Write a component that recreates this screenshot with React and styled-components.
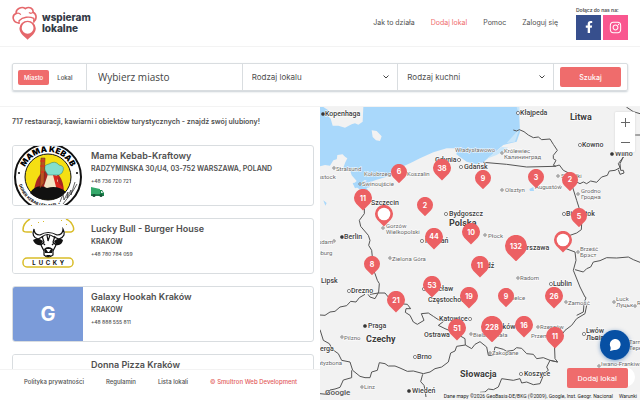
import React from 'react'
import styled, { createGlobalStyle, css } from 'styled-components'
import { FaFacebookF, FaInstagram } from 'react-icons/fa'

const colors = {
  brand: '#ef6c6c',
  text: '#4f4f4f',
  line: '#d9dde0',
}

const cards = [
  {
    name: 'Mama Kebab-Kraftowy',
    address: 'RADZYMINSKA 30/U4, 03-752 WARSZAWA, POLAND',
    phone: '+48 736 720 721',
    thumb: 'kebab',
    delivery: true,
  },
  {
    name: 'Lucky Bull - Burger House',
    address: 'KRAKOW',
    phone: '+48 780 784 059',
    thumb: 'bull',
  },
  {
    name: 'Galaxy Hookah Kraków',
    address: 'KRAKOW',
    phone: '+48 888 555 811',
    thumb: 'letter',
  },
  {
    name: 'Donna Pizza Kraków',
    thumb: 'none',
  },
]

// x, y is the middle of the pin head on the 320x293 map
const pins = [
  { x: 79, y: 65, size: 16, count: 6 },
  { x: 122, y: 61, size: 18, count: 38 },
  { x: 163, y: 71, size: 16, count: 9 },
  { x: 216, y: 70, size: 16, count: 3 },
  { x: 250, y: 73, size: 16, count: 2 },
  { x: 43, y: 91, size: 18, count: 11 },
  { x: 105, y: 98, size: 16, count: 2 },
  { x: 64, y: 107, size: 18 },
  { x: 259, y: 109, size: 16, count: 5 },
  { x: 114, y: 130, size: 18, count: 44 },
  { x: 151, y: 125, size: 18, count: 10 },
  { x: 196, y: 139, size: 22, count: 132 },
  { x: 243, y: 133, size: 18 },
  { x: 52, y: 157, size: 16, count: 8 },
  { x: 160, y: 158, size: 18, count: 11 },
  { x: 112, y: 178, size: 18, count: 53 },
  { x: 149, y: 189, size: 18, count: 19 },
  { x: 186, y: 189, size: 16, count: 9 },
  { x: 234, y: 189, size: 18, count: 26 },
  { x: 76, y: 193, size: 18, count: 21 },
  { x: 137, y: 221, size: 18, count: 51 },
  { x: 172, y: 220, size: 22, count: 228 },
  { x: 204, y: 218, size: 18, count: 16 },
  { x: 235, y: 229, size: 18, count: 11 },
]

const capitals = ['Kopenhaga', 'Berlin', 'Praga', 'Wiedeń', 'Wilno']

// kind: c = country, b = big city, s = small town
const places = [
  ['c', 250, 13, 'Litwa'],
  ['c', 129, 119, 'Polska'],
  ['c', 46, 235, 'Czechy'],
  ['c', 140, 270, 'Słowacja'],
  ['b', 5, 9, 'Kopenhaga', 3, 7],
  ['b', 200, 8, 'Kłajpeda', 198, 6],
  ['b', 262, 40, 'Kowno', 260, 38],
  ['b', 295, 49, 'Wilno', 292, 47],
  ['b', 115, 55, 'Gdynia', 139, 53],
  ['b', 144, 62, 'Gdańsk', 141, 60],
  ['b', 51, 98, 'Szczecin'],
  ['b', 129, 109, 'Bydgoszcz', 126, 107],
  ['b', 24, 132, 'Berlin', 22, 130],
  ['b', 105, 136, 'Poznań', 102, 134],
  ['b', 246, 109, 'Białystok', 244, 107],
  ['b', 197, 143, 'Warszawa'],
  ['b', 159, 161, 'Łódź'],
  ['b', 233, 179, 'Lublin', 231, 177],
  ['b', 1, 176, 'Lipsk'],
  ['b', 31, 186, 'Drezno', 29, 184],
  ['b', 106, 184, 'Wrocław', 104, 182],
  ['b', 108, 195, 'Częstochowa'],
  ['b', 48, 221, 'Praga', 45, 219],
  ['b', 119, 214, 'Katowice', 150, 212],
  ['b', 104, 230, 'Ostrawa'],
  ['b', 172, 222, 'Kraków'],
  ['b', 97, 252, 'Brno', 95, 250],
  ['b', 92, 286, 'Wiedeń', 89, 284],
  ['b', 204, 269, 'Koszyce', 201, 267],
  ['b', 266, 226, 'Lwów', 264, 227],
  ['b', 266, 233, 'Львів'],
  ['b', -25, 244, 'Norymberga'],
  ['s', 16, 64, 'Stralsund', 14, 61],
  ['s', -6, 72, 'Rostock'],
  ['s', 44, 69, 'Kołobrzeg'],
  ['s', 87, 69, 'Koszalin'],
  ['s', 42, 79, 'Świnoujście', 40, 77],
  ['s', 135, 45, 'Władysławowo'],
  ['s', 184, 46, 'Królewiec', 182, 46],
  ['s', 184, 52, 'Калининград'],
  ['s', 185, 85, 'Olsztyn', 182, 83],
  ['s', 215, 82, 'Augustów', 240, 80],
  ['s', 241, 71, 'Suwałki', 238, 69],
  ['s', 261, 86, 'Grodno', 258, 87],
  ['s', 261, 92, 'Гродна'],
  ['s', 66, 121, 'Gorzów', 63, 121],
  ['s', 66, 127, 'Wielkopolski'],
  ['s', -11, 137, 'Potsdam', 14, 134],
  ['s', -18, 148, 'Magdeburg'],
  ['s', 72, 154, 'Zielona Góra', 70, 151],
  ['s', 168, 131, 'Płock', 165, 128],
  ['s', 260, 144, 'Brześć', 258, 145],
  ['s', 260, 150, 'Брэст'],
  ['s', 200, 173, 'Radom', 198, 171],
  ['s', 189, 193, 'Kielce'],
  ['s', 248, 198, 'Zamość', 246, 195],
  ['s', 296, 194, 'Łuck', 294, 195],
  ['s', 296, 200, 'Луцьк'],
  ['s', 317, 198, 'Równe', 315, 199],
  ['s', 24, 233, 'Pilzno', 22, 230],
  ['s', -6, 258, 'Ratyzbona'],
  ['s', 153, 230, 'Bielsko-Biała', 151, 227],
  ['s', 220, 222, 'Rzeszów', 218, 220],
  ['s', 211, 231, 'Przemyśl'],
  ['s', 172, 248, 'Zakopane', 170, 246],
  ['s', 44, 282, 'Linz', 42, 280],
  ['s', 309, 237, 'Tarnopol'],
  ['s', 309, 243, 'Тернопіль'],
  ['s', 281, 259, 'Iwano-Frankiwsk', 279, 259],
]

const borders = [
  'M133 305 133 320 118 340 122 358 145 385 150 400 146 415 155 430 157 450 155 480 165 500 172 520 178 530 176 555 165 575 150 570 144 562',
  'M135 562 118 572 108 585 92 583 80 596 60 600 45 613 30 615 15 625 0 624',
  'M150 562 175 558 195 558 205 570 225 575 240 590 262 592 272 605 258 605 256 616 270 625 280 645 292 652 312 640 304 620 325 618 340 628 355 638 375 640 355 655 375 665 400 675 435 695 436 714',
  'M480 704 465 712 455 725 436 714 410 718 405 732 392 738 385 765 365 780 345 785 330 795 310 800 280 792 262 793 240 783 225 777 205 777 195 770 178 767 172 790 155 795 150 812 135 812 120 808 98 790 90 765 65 760 55 740 38 728 28 710 10 700 0 668',
  'M95 790 95 812 70 819 60 841 45 846 30 849 20 862 0 860',
  'M308 802 302 824 312 835 315 849 318 870',
  'M580 69 590 72 598 68 612 74 625 84 640 92 655 90 665 98 690 96 700 112 712 130 700 145 700 155 708 160 700 175 708 178',
  'M490 166 560 172 620 180 705 178 718 174 730 190 750 200 770 225 780 230 790 225 800 230 812 222 830 226 845 210 862 205 868 192 885 190 900 182 895 170 910 150 900 170 902 190 910 190 912 198 900 202 895 188',
  'M919 0 940 14 960 20M942 84 960 84',
  'M757 238 770 280 778 305M785 350 784 368 770 378 750 385M738 425 765 435 768 460 760 490 768 510 780 540 795 570 798 572 792 590 790 615 770 625',
  'M765 488 790 495 800 485 812 480 820 465 840 461 860 452 890 453 925 450 940 458 960 466',
  'M800 595 795 620 770 635 755 655 735 670 720 690 703 705 705 755 713 765 690 760 670 752 650 755 640 742 620 740 605 724 590 722 580 730 560 733 550 727 525 720 520 745 505 745 500 720 480 704',
  'M713 765 690 760 680 780 685 790 672 800 660 830 640 833 620 825 605 828 600 815 580 820 545 815 535 840 520 848 505 846 495 855 480 856',
]

export default function App() {
  return (
    <Page>
      <GlobalStyle />
      <Header />
      <Search />
      <Main>
        <Listing />
        <Map />
      </Main>
    </Page>
  )
}

function Header() {
  return (
    <HeaderBar>
      <Brand href='#'>
        <LogoMark />
        <span>
          wspieram
          <br />
          lokalne
        </span>
      </Brand>
      <Nav>
        <NavLink href='#'>Jak to działa</NavLink>
        <NavLink href='#' $active>
          Dodaj lokal
        </NavLink>
        <NavLink href='#'>Pomoc</NavLink>
        <NavLink href='#'>Zaloguj się</NavLink>
      </Nav>
      <Social>
        <p>Dołącz do nas na:</p>
        <div>
          <SocialLink href='#' aria-label='Facebook' $color='#374f8d'>
            <FaFacebookF size={12} />
          </SocialLink>
          <SocialLink href='#' aria-label='Instagram' $color='#f9578f'>
            <FaInstagram size={13} />
          </SocialLink>
        </div>
      </Social>
    </HeaderBar>
  )
}

function LogoMark() {
  return (
    <svg width='25' height='34' viewBox='36 15 75 104' fill='none' stroke='#e5676b' strokeWidth='5'>
      <path d='M57 67C37 66 33 44 48 38C46 23 66 15 76 23C88 15 101 22 100 34C114 42 109 59 101 62' />
      <path d='M48 38C54 35 60 38 62 42M100 34C95 38 91 38 87 35' strokeWidth='4' />
      <path d='M57 70V60C68 48 88 46 102 53V66' strokeWidth='4' />
      <path d='M83 118C71 107 58 98 58 83A25 23 0 0 1 108 83C108 98 95 107 83 118Z' fill='#e5676b' stroke='none' />
      <circle cx='83' cy='82' r='18' fill='#fff' stroke='none' />
    </svg>
  )
}

function Search() {
  return (
    <SearchArea>
      <SearchForm onSubmit={(e) => e.preventDefault()}>
        <Switch>
          <label>
            <input type='radio' name='mode' defaultChecked />
            <span>Miasto</span>
          </label>
          <label>
            <input type='radio' name='mode' />
            <span>Lokal</span>
          </label>
        </Switch>
        <Field>
          <CityInput type='text' placeholder='Wybierz miasto' aria-label='Wybierz miasto' />
        </Field>
        <Dropdown label='Rodzaj lokalu' />
        <Dropdown label='Rodzaj kuchni' />
        <SubmitCell>
          <PrimaryButton type='submit'>Szukaj</PrimaryButton>
        </SubmitCell>
      </SearchForm>
    </SearchArea>
  )
}

function Dropdown({ label }) {
  return (
    <Field>
      <Select aria-label={label}>
        <option>{label}</option>
      </Select>
      <svg width='6' height='4' viewBox='0 0 6 4' fill='none' stroke='#444'>
        <path d='M.5 .5 3 3 5.500 .5' />
      </svg>
    </Field>
  )
}

function Listing() {
  return (
    <ListPanel>
      <List>
        <Summary>717 restauracji, kawiarni i obiektów turystycznych - znajdź swój ulubiony!</Summary>
        {cards.map((card) => (
          <Card key={card.name}>
            <Thumb $letter={card.thumb === 'letter'}>
              {card.thumb === 'kebab' && <KebabLogo />}
              {card.thumb === 'bull' && <BullLogo />}
              {card.thumb === 'letter' && 'G'}
            </Thumb>
            <CardBody>
              <h2>{card.name}</h2>
              {card.address && <h3>{card.address}</h3>}
              {card.phone && <p>{card.phone}</p>}
              {card.delivery && <Truck />}
            </CardBody>
          </Card>
        ))}
      </List>
      <Footer>
        <a href='#'>Polityka prywatności</a>
        <a href='#'>Regulamin</a>
        <a href='#'>Lista lokali</a>
        <FooterCredit href='#'>© Smultron Web Development</FooterCredit>
      </Footer>
    </ListPanel>
  )
}

function KebabLogo() {
  return (
    <svg width='70' height='59' viewBox='0 0 70 59'>
      <defs>
        <path id='arc-top' d='M10 31A25 25 0 0 1 60 31' />
        <path id='arc-bottom' d='M5 31A30 30 0 0 0 65 31' />
      </defs>
      <circle cx='35' cy='31' r='33' fill='#fff' stroke='#111' strokeWidth='2' />
      <circle cx='35' cy='31' r='23' fill='#f5df13' stroke='#111' />
      <path d='M21 45Q23 27 35 24Q50 25 51 46L44 51H27Z' fill='#a92522' />
      <path d='M35 28H44L46 43 37 47 31 40Z' fill='#f3e6c6' />
      <path d='M40 29 46 30 44 35 50 42 44 45Z' fill='#d9251c' />
      <path d='M33 26Q29 19 36 18Q42 14 46 19Q53 20 49 27L46 29H35Z' fill='#83dfcd' stroke='#2b7a6f' strokeWidth='.5' />
      <path d='M17 47Q23 37 34 42Q45 39 53 46Q46 54 35 54Q24 54 17 47Z' fill='#111' />
      <path d='M28 12H32L31 37 27 42Z' fill='#b95422' stroke='#5b2814' strokeWidth='.5' />
      <path d='M27 15H32M27 20H32M28 26H31' stroke='#e6251c' />
      <circle cx='6' cy='27' r='1' />
      <circle cx='64' cy='27' r='1' />
      <text fontFamily='Inter, sans-serif' fontWeight='900' fontSize='8' textAnchor='middle'>
        <textPath href='#arc-top' startOffset='50%'>MAMA KEBAB</textPath>
      </text>
      <text fontFamily='Inter, sans-serif' fontWeight='700' fontSize='4' textAnchor='middle'>
        <textPath href='#arc-bottom' startOffset='36%'>DONER KEBAB I FALAFEL •</textPath>
      </text>
      <path d='M47 56 50 48 51 54 55 46 54 52 58 44 58 49 62 36M50 58 60 45 64 38' fill='none' stroke='#222' strokeWidth='.7' />
    </svg>
  )
}

function BullLogo() {
  return (
    <svg width='70' height='54' viewBox='0 0 70 54' fill='none'>
      <path d='M17 0Q10 4 10 11Q10 13 14 13H58Q62 12 60 7Q58 2 53 0' stroke='#d9bd29' strokeWidth='1.500' />
      <path d='M18 6l1 1M25 3l1 1M30 2l1 1M48 2l1-1M54 6l-1-1' stroke='#d9bd29' />
      <path d='M19 11h33v25H19z' fill='#fff' />
      <path d='M21 10Q18 18 25 20L29 18Q34 13 41 18L46 20Q54 17 50 10Q50 16 44 16Q35 11 27 16Q21 16 21 10Z' fill='#fff' stroke='#111' strokeWidth='1.200' />
      <path d='M20 21Q25 18 30 22L28 26Q22 27 20 21ZM50 21Q46 18 41 22L43 26Q49 27 50 21Z' fill='#111' />
      <path d='M29 17 31 23 28 26 31 32 31 36 35 39 40 36 40 32 43 26 40 23 42 17M34 16 35 22 37 16M32 26l-2-2M39 26l2-2' stroke='#111' strokeWidth='1.200' />
      <path d='M31 30Q35 26 40 30L39 34H32ZM33 36H38L35 39Z' fill='#111' />
      <path d='M33 30h5l-2 3h-1z' fill='#fff' />
      <rect x='10' y='39' width='50' height='9' rx='4' fill='#fff' stroke='#d9bd29' strokeWidth='1.500' />
      {['L', 'U', 'C', 'K', 'Y'].map((letter, i) => (
        <text key={letter} x={21 + i * 7} y='46' fill='#111' fontFamily='Inter, sans-serif' fontWeight='700' fontSize='6' textAnchor='middle'>
          {letter}
        </text>
      ))}
    </svg>
  )
}

function Truck() {
  return (
    <svg width='13' height='10' viewBox='0 0 13 10'>
      <path d='M0 0 9 2V8H0Z' fill='#35a96a' />
      <path d='M9 3H11L13 6V9H9Z' fill='#17834b' />
      <path d='M10 4H11L12 6H10Z' fill='#d5f0e0' />
      <path d='M0 7H9V9H0Z' fill='#1d7949' />
      <circle cx='3' cy='8.500' r='1.500' fill='#175236' />
      <circle cx='10' cy='8.500' r='1.500' fill='#175236' />
    </svg>
  )
}

function Map() {
  return (
    <MapPanel>
      <MapCanvas>
        <Terrain />
        <PlaceNames />
        {pins.map((pin) => (
          <Pin key={`${pin.x}-${pin.y}`} {...pin} />
        ))}
      </MapCanvas>
      <Zoom>
        <button type='button' aria-label='Powiększ'>
          <svg width='9' height='9' viewBox='0 0 9 9' stroke='#666'>
            <path d='M4.500 0V9M0 4.500H9' />
          </svg>
        </button>
        <button type='button' aria-label='Pomniejsz'>
          <svg width='9' height='9' viewBox='0 0 9 9' stroke='#666'>
            <path d='M0 4.500H9' />
          </svg>
        </button>
      </Zoom>
      <Google>Google</Google>
      <Attribution>
        <span>Dane mapy ©2026 GeoBasis-DE/BKG (©2009), Google, Inst. Geogr. Nacional</span>
        <a href='#'>Warunki</a>
      </Attribution>
      <CameraControl />
      <Actions>
        <ChatButton type='button' aria-label='Czat'>
          <svg width='13' height='12' viewBox='0 0 13 12' fill='#fff'>
            <path d='M7 0A5.500 5.500 0 1 1 5 11L1 12Q2 10 1.500 8A5.500 5.500 0 0 1 7 0Z' />
          </svg>
        </ChatButton>
        <PrimaryButton type='button' $large>
          Dodaj lokal
        </PrimaryButton>
      </Actions>
    </MapPanel>
  )
}

function Terrain() {
  return (
    <svg viewBox='0 0 960 879'>
      <rect width='960' height='879' fill='#f2f2f2' />
      <path
        fill='#a9d8fb'
        d='M0 0H592L598 30 600 75 590 104 550 114 515 144 490 166 470 172 440 164 420 150 409 142 412 124 380 124 340 136 300 154 270 169 245 180 230 200 200 209 170 218 145 227 150 240 120 248 100 232 110 222 95 205 90 190 70 182 75 168 82 154 65 143 55 155 40 160 30 176 15 174 0 178Z'
      />
      <path fill='#f2f2f2' d='M10 0 25 10 22 25 32 35 38 56 55 56 75 62 95 52 105 49 115 53 128 44 130 0ZM155 70 170 72 185 88 180 102 168 100 158 90ZM52 144 68 142 78 154 66 168 50 160Z' />
      <path fill='#c9e6fa' d='M585 80 600 60 585 104 560 108ZM590 0 598 0 600 30ZM500 155 545 120 565 122 530 144Z' />
      <path fill='#a9d8fb' d='M98 228 122 226 145 250 130 252 124 238 105 244ZM10 280 20 288 16 296ZM628 246 640 240 642 252 630 252Z' />
      <g fill='none' stroke='#555' strokeWidth='3' strokeLinejoin='round'>
        {borders.map((d) => (
          <path key={d} d={d} />
        ))}
      </g>
    </svg>
  )
}

function PlaceNames() {
  return (
    <svg viewBox='0 0 320 293'>
      {places.map(([kind, x, y, name, dotX, dotY]) => (
        <g key={name}>
          {dotX && (
            <circle
              cx={dotX}
              cy={dotY}
              r={kind === 'b' ? 1.6 : 1.2}
              fill={capitals.includes(name) ? '#333' : '#fff'}
              stroke='#555'
              strokeWidth='.7'
            />
          )}
          <PlaceName x={x} y={y} $kind={kind}>
            {name}
          </PlaceName>
        </g>
      ))}
    </svg>
  )
}

function Pin({ x, y, size, count }) {
  return (
    <PinButton
      type='button'
      aria-label={count ? undefined : 'Lokal'}
      $size={size}
      style={{ left: `${(x / 320) * 100}%`, top: `${(y / 293) * 100}%` }}
    >
      <svg viewBox='0 0 20 24'>
        <path d='M10 24 2.500 16.500A10 10 0 1 1 17.500 16.500Z' fill='#ec6063' />
        {!count && <circle cx='10' cy='10' r='7' fill='#fff' />}
      </svg>
      <span>{count}</span>
    </PinButton>
  )
}

const GlobalStyle = createGlobalStyle`
  * {
    box-sizing: border-box;
  }

  body {
    margin: 0;
    background: #fff;
    color: ${colors.text};
    font-family: Inter, 'Liberation Sans', sans-serif;
  }

  button,
  input,
  select {
    font-family: inherit;
    color: inherit;
  }

  a {
    color: inherit;
    text-decoration: none;
  }

  h2,
  h3,
  p {
    margin: 0;
  }

  svg {
    display: block;
    flex: none;
  }
`

const Page = styled.div`
  display: flex;
  flex-direction: column;
  height: 100vh;
  overflow: hidden;
`

const HeaderBar = styled.header`
  display: flex;
  align-items: center;
  padding: 6px 12px;
  border-bottom: 1px solid #f3f3f3;
`

const Brand = styled.a`
  display: flex;
  align-items: center;
  gap: 5px;
  margin-right: auto;
  color: #343a46;
  font-size: 10px;
  font-weight: 800;
  line-height: 11px;
`

const Nav = styled.nav`
  display: flex;
  gap: 16px;
  margin-right: 18px;
`

const NavLink = styled.a`
  font-size: 7px;
  line-height: 12px;
  color: ${(p) => (p.$active ? colors.brand : colors.text)};
`

const Social = styled.div`
  font-size: 5px;
  font-weight: 600;
  line-height: 6px;

  div {
    display: flex;
    gap: 2px;
    padding-top: 2px;
  }
`

const SocialLink = styled.a`
  display: grid;
  place-items: center;
  width: 25px;
  height: 25px;
  color: #fff;
  background: ${(p) => p.$color};
`

const SearchArea = styled.section`
  padding: 16px 12px 15px;
  border-bottom: 1px solid #f3f3f3;
`

const SearchForm = styled.form`
  display: grid;
  grid-template-columns: 73px 1fr 1fr 1fr 74px;
  height: 28px;
  border: 1px solid ${colors.line};
  border-radius: 2px;
  box-shadow: 0 1px 2px #c9d0d6;
`

const Switch = styled.div`
  display: flex;
  align-items: center;
  gap: 2px;
  padding-left: 5px;

  label {
    position: relative;
  }

  input {
    position: absolute;
    opacity: 0;
    margin: 0;
  }

  span {
    display: block;
    padding: 0 6px;
    border-radius: 2px;
    font-size: 6px;
    font-weight: 500;
    line-height: 15px;
  }

  input:checked + span {
    background: ${colors.brand};
    color: #fff;
  }
`

const Field = styled.div`
  display: flex;
  align-items: center;
  min-width: 0;
  padding-right: 8px;
  border-left: 1px solid ${colors.line};
`

const control = css`
  flex: 1;
  min-width: 0;
  height: 100%;
  padding: 0 0 0 9px;
  border: 0;
  background: none;
  outline: none;
  appearance: none;
`

const CityInput = styled.input`
  ${control}
  padding-left: 11px;
  font-family: 'Open Sans', sans-serif;
  font-size: 10px;

  &::placeholder {
    color: #444;
    opacity: 1;
  }
`

const Select = styled.select`
  ${control}
  font-size: 8px;
`

const SubmitCell = styled.div`
  display: grid;
  padding: 3px 6px;
  border-left: 1px solid ${colors.line};
`

const PrimaryButton = styled.button`
  height: 20px;
  padding: 0 11px;
  border: 0;
  border-radius: 2px;
  background: ${colors.brand};
  color: #fff;
  font-size: ${(p) => (p.$large ? '8px' : '7px')};
  font-weight: ${(p) => (p.$large ? 400 : 500)};
`

const Main = styled.main`
  flex: 1;
  min-height: 0;
  display: grid;
  grid-template-columns: repeat(2, minmax(0, 1fr));
  grid-template-rows: minmax(0, 1fr);
`

const ListPanel = styled.section`
  display: flex;
  flex-direction: column;
  min-height: 0;
`

const List = styled.div`
  flex: 1;
  min-height: 0;
  display: flex;
  flex-direction: column;
  gap: 12px;
  padding: 10px 6px 0 12px;
  overflow: hidden;
`

const Summary = styled.p`
  margin-bottom: 6px;
  font-size: 7px;
  font-weight: 600;
  line-height: 10px;
`

const Card = styled.article`
  flex: none;
  display: flex;
  min-height: 56px;
  border: 1px solid ${colors.line};
  border-radius: 3px;
  overflow: hidden;
`

const Thumb = styled.div`
  display: grid;
  place-items: center;
  width: 70px;
  background: ${(p) => (p.$letter ? '#7b9bd9' : '#fff')};
  color: #fff;
  font-size: 20px;
  font-weight: 700;
`

const CardBody = styled.div`
  padding: 3px 8px 7px;

  h2 {
    font-size: 9px;
    font-weight: 600;
    line-height: 14px;
  }

  h3 {
    font-size: 7px;
    font-weight: 600;
    line-height: 12px;
  }

  p {
    font-size: 5px;
    font-weight: 500;
    line-height: 12px;
  }
`

const Footer = styled.footer`
  display: flex;
  gap: 22px;
  padding: 6px 0 12px 24px;
  border-top: 1px solid #f3f3f3;
  font-size: 6px;
  font-weight: 500;
  line-height: 12px;
  white-space: nowrap;
`

const FooterCredit = styled.a`
  color: #e25b5b;
`

const MapPanel = styled.section`
  position: relative;
  overflow: hidden;
  font-family: Roboto, sans-serif;
`

const MapCanvas = styled.div`
  position: relative;
  min-width: 100%;
  min-height: 100%;
  aspect-ratio: 320 / 293;

  > svg {
    position: absolute;
    inset: 0;
    width: 100%;
    height: 100%;
  }
`

const placeStyles = {
  c: css`
    font-size: 9px;
    font-weight: 700;
  `,
  b: css`
    font-size: 7px;
    font-weight: 500;
  `,
  s: css`
    font-size: 6px;
    fill: #666;
  `,
}

const PlaceName = styled.text`
  fill: #3c3c3c;
  stroke: #fff;
  stroke-width: 1px;
  paint-order: stroke;
  ${(p) => placeStyles[p.$kind]}
`

const PinButton = styled.button`
  position: absolute;
  width: ${(p) => p.$size}px;
  height: ${(p) => p.$size}px;
  padding: 0;
  border: 0;
  background: none;
  color: #fff;
  font-family: Inter, sans-serif;
  font-size: 7px;
  font-weight: 700;
  transform: translate(-50%, -50%);

  svg {
    position: absolute;
    top: 0;
    left: 0;
    width: 100%;
  }

  span {
    position: relative;
  }
`

const Zoom = styled.div`
  position: absolute;
  top: 5px;
  right: 5px;
  display: grid;
  background: #fff;
  border-radius: 1px;
  box-shadow: 0 0 2px #ccc;

  button {
    display: grid;
    place-items: center;
    width: 20px;
    height: 20px;
    padding: 0;
    border: 0;
    background: none;
  }
`

const Google = styled.span`
  position: absolute;
  left: 5px;
  bottom: 2px;
  font-size: 8px;
  font-weight: 500;
  line-height: 10px;
  text-shadow: 0 0 1px #fff;
`

const Attribution = styled.div`
  position: absolute;
  right: 0;
  bottom: 0;
  display: flex;
  gap: 6px;
  padding: 0 3px;
  background: #f5f5f5b3;
  color: #222;
  font-size: 5px;
  line-height: 8px;
  white-space: nowrap;
`

const CameraControl = styled.div`
  position: absolute;
  right: 5px;
  bottom: 13px;
  width: 20px;
  height: 20px;
  border-radius: 50%;
  background: #fff;
`

const Actions = styled.div`
  position: absolute;
  right: 12px;
  bottom: 12px;
  display: flex;
  flex-direction: column;
  gap: 8px;
`

const ChatButton = styled.button`
  display: grid;
  place-items: center;
  align-self: flex-end;
  width: 30px;
  height: 30px;
  margin-right: -2px;
  padding: 0;
  border: 0;
  border-radius: 50%;
  background: #0750a4;
  box-shadow: 0 1px 4px #0750a480;
`
